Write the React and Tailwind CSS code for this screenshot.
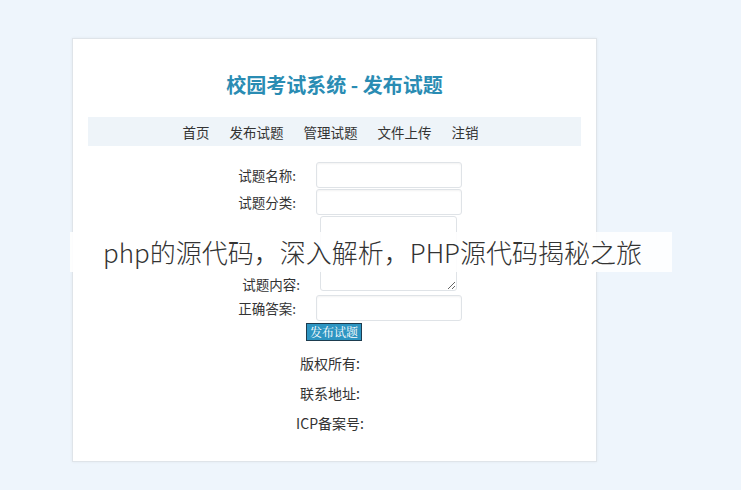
const cjk = { fontFamily: '"Noto Sans CJK SC", "Noto Sans", sans-serif' };

const Field = ({ label }) => (
  <div className="flex items-center">
    <span className="w-[96px] text-right text-[13.5px] text-[#333]">{label}</span>
    <input
      className="ml-[20px] h-[26px] w-[146px] rounded-[3px] border border-[#dfe3e7] bg-white shadow-[inset_0_1px_2px_rgba(0,0,0,0.05)] outline-none"
      type="text"
    />
  </div>
);

export default function App() {
  return (
    <div className="relative h-[490px] w-[741px] overflow-hidden bg-[#eef5fc]" style={cjk}>
      <div className="pl-[72px] pt-[38px]">
        <div className="h-[424px] w-[525px] border border-[#dfe4e9] bg-white shadow-[0_0_3px_rgba(0,0,0,0.06)]">
          <h1 className="mt-[32px] text-center text-[20px] font-bold leading-[28px] text-[#2a8cb3]">
            校园考试系统 - 发布试题
          </h1>

          <nav className="mx-[15px] mt-[18px] flex h-[29px] items-center justify-center gap-[20px] bg-[#eef4f9] pr-[8px] text-[13.5px] leading-[28px] text-[#333]">
            <a>首页</a>
            <a>发布试题</a>
            <a>管理试题</a>
            <a>文件上传</a>
            <a>注销</a>
          </nav>

          <form className="mt-[16px] pl-[127px]">
            <Field label="试题名称:" />
            <div className="mt-[1px]">
              <Field label="试题分类:" />
            </div>
            <div className="mt-[1px] flex items-end">
              <span className="mb-[-3px] w-[100px] text-right text-[13.5px] text-[#333]">试题内容:</span>
              <textarea className="ml-[20px] h-[75px] w-[137px] rounded-[3px] border border-[#dfe3e7] bg-white outline-none" />
            </div>
            <div className="mt-[4px]">
              <Field label="正确答案:" />
            </div>
            <button
              className="ml-[106px] mt-[2px] flex h-[18px] w-[56px] items-center justify-center border border-[#1d3c4f] bg-[#2d95c2] text-[12px] leading-none text-white"
              style={{ fontFamily: '"Noto Serif CJK SC", "Noto Sans CJK SC", serif' }}
              type="button"
            >
              发布试题
            </button>
          </form>

          <div className="mt-[12px] flex flex-col items-center gap-[10px] pr-[9px] text-[14px] leading-[20px] text-[#333]">
            <p>版权所有:</p>
            <p>联系地址:</p>
            <p>ICP备案号:</p>
          </div>
        </div>
      </div>

      <div className="absolute left-[70px] top-[232px] flex h-[40px] w-[602px] items-center bg-white/90 pl-[33px]">
        <span className="text-[26px] font-light leading-[36px] text-[#333]">php的源代码，深入解析，PHP源代码揭秘之旅</span>
      </div>
    </div>
  );
}
